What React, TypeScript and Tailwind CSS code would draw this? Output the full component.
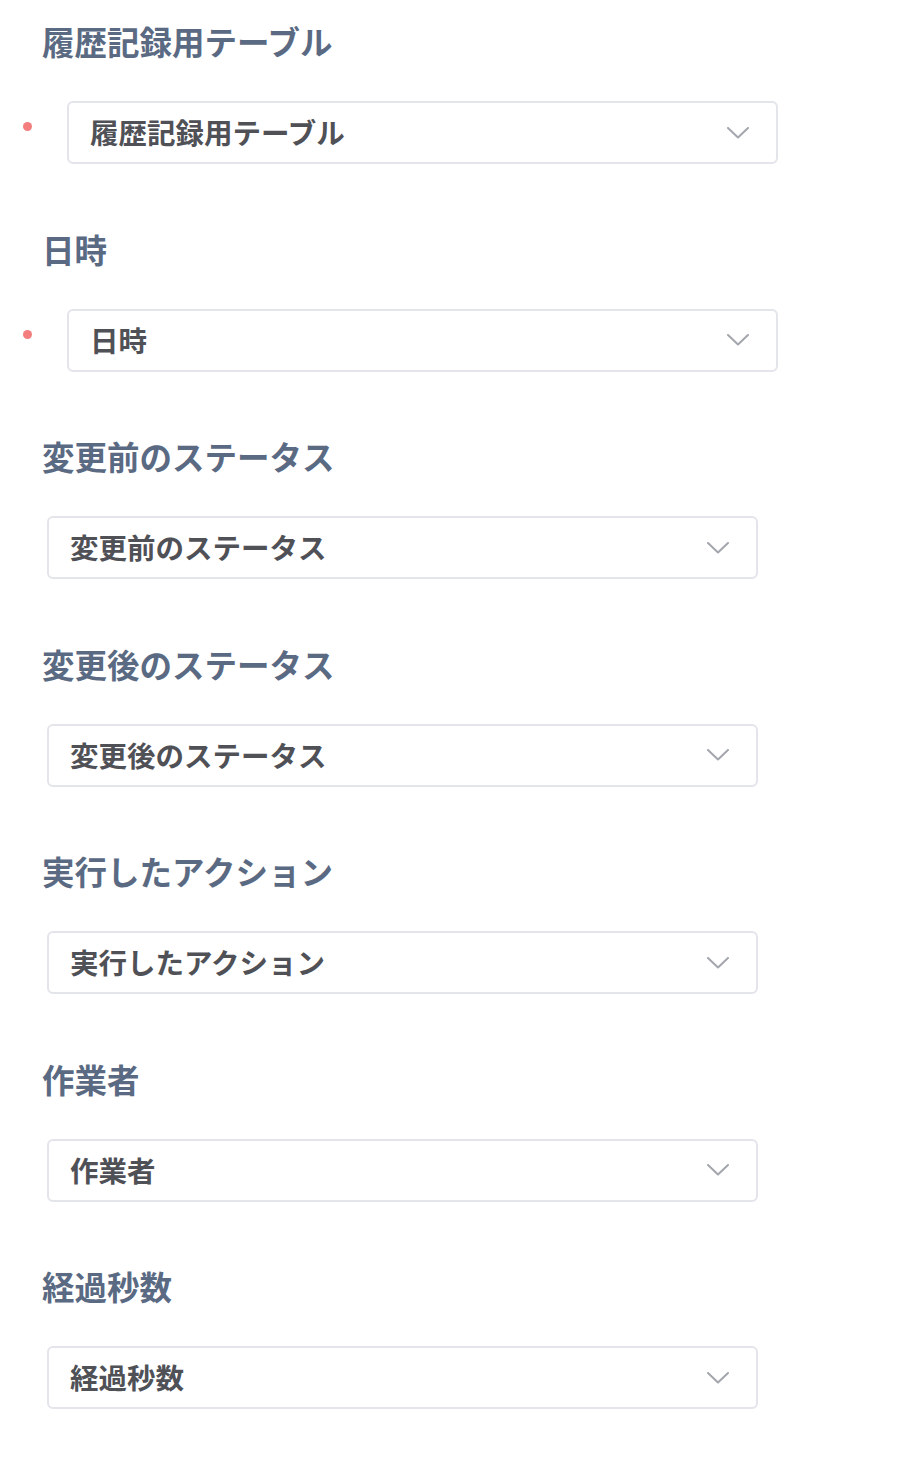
const fields = [
  { label: '履歴記録用テーブル', required: true },
  { label: '日時', required: true },
  { label: '変更前のステータス', required: false },
  { label: '変更後のステータス', required: false },
  { label: '実行したアクション', required: false },
  { label: '作業者', required: false },
  { label: '経過秒数', required: false },
]

function Chevron() {
  return (
    <svg width="22" height="12" viewBox="0 0 22 12" fill="none" className="shrink-0">
      <polyline points="1,1 11,10.5 21,1" stroke="#a3a6ad" strokeWidth="2" strokeLinecap="round" strokeLinejoin="round" />
    </svg>
  )
}

export default function App() {
  return (
    <div
      className="min-h-[1458px] w-[905px] bg-white pt-[21px] pl-[20px]"
      style={{ fontFamily: '"Noto Sans CJK JP", "Noto Sans", sans-serif' }}
    >
      {fields.map((f) => (
        <div key={f.label} className="mb-[64.5px]">
          <div className="h-[40px] pl-[22px] text-[32.5px] leading-[40px] font-semibold text-[#5b6a83]">
            {f.label}
          </div>
          <div className="mt-[40px] flex items-center">
            {f.required ? (
              <div className="w-[47px] shrink-0">
                <span className="ml-[3px] mb-[12px] block h-[9px] w-[9px] rounded-full bg-[#f47e7e]" />
              </div>
            ) : (
              <div className="w-[27px] shrink-0" />
            )}
            <div className="flex h-[63px] w-[711px] items-center justify-between rounded-[6px] border-2 border-[#e3e5ea] pl-[21px] pr-[27px]">
              <span className="text-[28.5px] leading-none font-semibold text-[#4f5157]">{f.label}</span>
              <Chevron />
            </div>
          </div>
        </div>
      ))}
    </div>
  )
}
